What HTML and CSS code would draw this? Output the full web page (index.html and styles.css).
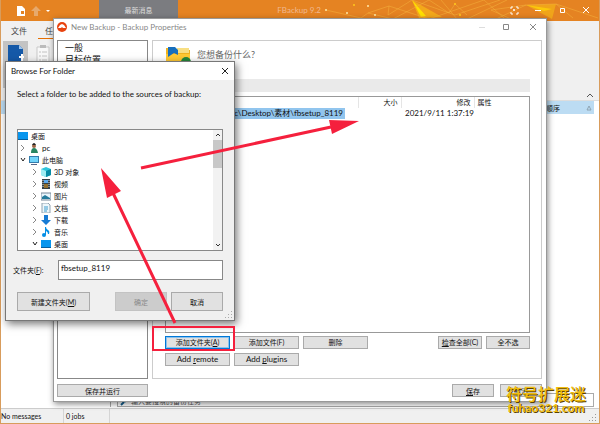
FILE: index.html
```html
<!DOCTYPE html>
<html lang="zh-CN">
<head>
<meta charset="utf-8">
<title>FBackup 9.2</title>
<link rel="stylesheet" href="styles.css">
</head>
<body>
<main class="app">
  <header class="titlebar">
    <svg class="quick" width="38" height="20" viewBox="0 0 38 20"><path d="M1 6h5l3 3v7H1z" fill="#fff"/><path d="M5 11h3v3H5z" fill="#e58322"/><path d="M20 6l5 5h-3v5h-4v-5h-3z" fill="#e7a96c"/><path d="M30 10h4l-2 2z" fill="#fff"/></svg>
    <span class="news">最新消息</span>
    <span class="product">FBackup 9.2</span>
    <svg class="network" width="278" height="20" viewBox="0 0 278 20">
      <path d="M91 0l30 17-23 1z" fill="#f3a81a"/><path d="M91 0l14 16-5 1z" fill="#ffe000"/>
      <path d="M205 5l30-1-4 15z" fill="#f0a41a"/><path d="M205 5l26 4-8 2z" fill="#fbc80a"/>
      <g fill="none" stroke="#f5b33d" stroke-width="1" opacity=".5"><path d="M5 10l35 8 7-5 21-7-1 9 24-15M47 13l25 6 36-19 20 13 6-9 12 11M68 6l40 13M91 0l43 15 45-15M108 19l55-19 20 18M146 19l40-19M170 10l35-5 30-1 17 14M205 5l-30 14M235 4l42 14M170 10l20 9M120 0l16 19"/></g>
      <g fill="#ffe9a8"><circle cx="5" cy="10" r="1"/><circle cx="26" cy="13" r="1"/><circle cx="47" cy="6" r="1"/><circle cx="54" cy="15" r="1"/></g><g fill="#ffc91c"><circle cx="33" cy="5" r="1"/><circle cx="134" cy="4" r="1"/><circle cx="139" cy="15" r="1"/></g>
      <g fill="none" stroke="#fff"><path d="M190 9V7h2m3 0h2v2m0 3v2h-2m-3 0h-2v-2M214 10.500h6M239.500 8.500h4v4h-4zM262 7l6 6m0-6l-6 6"/></g><circle cx="193" cy="10" r="1" fill="#fff"/>
    </svg>
  </header>
  <section class="ribbon">
    <nav class="tabs"><a href="#file">文件</a><a class="current" href="#task">任务</a></nav>
    <div class="tools">
      <button class="tool chosen" aria-label="New"><svg width="16" height="20" viewBox="0 0 16 20"><path d="M0 1h11l4 4v14H0z" fill="#1559a8"/><path d="M11 1v4h4z" fill="#9ec6ee"/><path d="M11 13h6m-3-3v7" stroke="#fff" stroke-width="2"/></svg></button>
      <button class="tool" aria-label="Tasks"><svg width="14" height="20" viewBox="0 0 14 20"><path d="M1 3h12v16H1z" fill="#f8f8f8" stroke="#c9c9c9"/><path d="M4 1h6v3H4z" fill="#bbb"/><path d="M3 8h2m1 0h5M3 12h2m1 0h5M3 16h2m1 0h5" stroke="#c2c2c2"/></svg></button>
      <svg class="fold" width="8" height="6" viewBox="0 0 8 6"><path d="M1 4l3-3 3 3" fill="none" stroke="#555"/></svg>
    </div>
  </section>
  <section class="workspace">
    <div class="columns"><span>顺序</span><svg width="6" height="6" viewBox="0 0 6 6"><path d="M3 1l2 4H1z" fill="none" stroke="#8fa4b2"/></svg></div>
    <div class="splitter"></div>
    <label class="search"><svg width="9" height="9" viewBox="0 0 9 9"><circle cx="5" cy="3" r="2" fill="none" stroke="#258fc0"/><path d="M4 5L1 8" stroke="#135f8f" stroke-width="2"/></svg><input type="text" aria-label="搜索" placeholder="输入要搜索的备份任务"></label>
  </section>
  <footer class="status"><span class="messages">No messages</span><span class="jobs">0 jobs</span><svg width="8" height="8" viewBox="0 0 8 8"><path d="M6 0h1v1H6zM3 3h1v1H3zM6 3h1v1H6zM0 6h1v1H0zM3 6h1v1H3zM6 6h1v1H6z" fill="#999"/></svg></footer>
</main>

<section class="window properties">
  <header class="caption">
    <svg width="10" height="10" viewBox="0 0 10 10"><circle cx="5" cy="5" r="5" fill="#e8430f"/><path d="M1 6h3l1-1 1 1h3L7 3 5 2 3 3z" fill="#fff"/></svg>
    <h1>New Backup - Backup Properties</h1>
    <svg class="controls" width="64" height="10" viewBox="0 0 64 10"><g fill="none" stroke="#888"><path d="M1 5.500h6" stroke="#ddd"/><path d="M25.500 2.500h5v5h-5zM52 2l6 6m0-6l-6 6"/></g></svg>
  </header>
  <div class="panes">
    <ul class="pages"><li>一般</li><li>目标位置</li></ul>
    <div class="page">
      <div class="question">
        <svg width="26" height="23" viewBox="0 0 26 23"><path d="M1 3h9l3 2h12v17H1z" fill="#f0b31f"/><path d="M12 3h12v5H12z" fill="#f8df83"/><path d="M1 9h24v13H1z" fill="#ffc933"/><path d="M3 2h7l3 3v5l-4-2-6 4z" fill="#176fbd"/><circle cx="21" cy="17" r="5" fill="#26883b"/></svg>
        <h2>您想备份什么?</h2>
      </div>
      <div class="band"></div>
      <div class="sources">
        <table>
          <thead><tr><th class="name"></th><th class="right size">大小</th><th class="right date">修改</th><th>属性</th></tr></thead>
          <tbody><tr><td><span class="path">C:\Users\pc\Desktop\素材\fbsetup_8119</span></td><td></td><td class="right">2021/9/11 1:37:19</td><td></td></tr></tbody>
        </table>
      </div>
      <div class="row actions">
        <button class="btn focus">添加文件夹(<u>A</u>)</button><button class="btn">添加文件(F)</button><button class="btn">删除</button>
        <button class="btn small push"><u>检</u>查全部(C)</button><button class="btn small">全不选</button>
      </div>
      <div class="row actions"><button class="btn latin">Add <u>r</u>emote</button><button class="btn latin">Add <u>p</u>lugins</button></div>
    </div>
  </div>
  <div class="row bottom"><button class="btn run">保存并运行</button><button class="btn end push"><u>保</u>存</button><button class="btn end">取消</button></div>
</section>

<section class="window browse">
  <header class="caption"><h1>Browse For Folder</h1><svg width="8" height="8" viewBox="0 0 8 8"><path d="M1 1l6 6m0-6L1 7" stroke="#222"/></svg></header>
  <div class="content">
    <p>Select a folder to be added to the sources of backup:</p>
    <div class="treebox">
      <ul class="tree">
        <li><svg class="ico" viewBox="0 0 10 10"><path d="M0 1h10v8H0z" fill="#0795ee"/><path d="M0 8h10v1H0z" fill="#055e9e"/></svg>桌面</li>
        <li><svg class="tw" viewBox="0 0 6 8"><path d="M1 1l3 3-3 3"/></svg><svg class="ico" viewBox="0 0 10 10"><circle cx="5" cy="3" r="2" fill="#9a6545"/><path d="M3 2q2-4 4 0z" fill="#222"/><path d="M2 10q0-5 3-5t4 5z" fill="#288562"/></svg><span class="latin">pc</span></li>
        <li><svg class="tw open" viewBox="0 0 6 8"><path d="M1 2l2 3 2-3"/></svg><svg class="ico" viewBox="0 0 10 10"><path d="M0 1h10v7H0z" fill="#347cac"/><path d="M1 2h8v5H1z" fill="#70d4fa"/><path d="M2 9h6v1H2z" fill="#568"/></svg>此电脑</li>
        <li class="deep"><svg class="tw" viewBox="0 0 6 8"><path d="M1 1l3 3-3 3"/></svg><svg class="ico" viewBox="0 0 10 10"><path d="M0 2l5-2 5 2v6l-5 2-5-2z" fill="#31c5dc"/><path d="M0 2l5 2v6L0 8z" fill="#a0edf3"/><path d="M5 4l5-2v6l-5 2z" fill="#078ba5"/></svg>3D 对象</li>
        <li class="deep"><svg class="tw" viewBox="0 0 6 8"><path d="M1 1l3 3-3 3"/></svg><svg class="ico" viewBox="0 0 10 10"><path d="M1 0h8v10H1z" fill="#344048"/><path d="M3 1h4v3H3z" fill="#5caaf0"/><path d="M3 5h4v4H3z" fill="#94702f"/><path d="M2 1v8M8 1v8" stroke="#ddd" stroke-dasharray="1 1"/></svg>视频</li>
        <li class="deep"><svg class="tw" viewBox="0 0 6 8"><path d="M1 1l3 3-3 3"/></svg><svg class="ico" viewBox="0 0 10 10"><path d="M0 2h10v7H0z" fill="#e8f5fc" stroke="#789" stroke-width="1"/><path d="M1 6l3-2 5 3v1H1z" fill="#247b9c"/></svg>图片</li>
        <li class="deep"><svg class="tw" viewBox="0 0 6 8"><path d="M1 1l3 3-3 3"/></svg><svg class="ico" viewBox="0 0 10 10"><path d="M1 0h6l2 2v8H1z" fill="#eef7fb" stroke="#91a4b1"/><path d="M3 4h4M3 6h4M3 8h3" stroke="#3b9bcd"/></svg>文档</li>
        <li class="deep"><svg class="tw" viewBox="0 0 6 8"><path d="M1 1l3 3-3 3"/></svg><svg class="ico" viewBox="0 0 10 10"><path d="M3 0h4v5h3l-5 5-5-5h3z" fill="#187bd4"/></svg>下载</li>
        <li class="deep"><svg class="tw" viewBox="0 0 6 8"><path d="M1 1l3 3-3 3"/></svg><svg class="ico" viewBox="0 0 10 10"><path d="M4 0h1q0 2 2 3t1 4H7q0-2-2-3v4H4z" fill="#058fe5"/><ellipse cx="3" cy="8" rx="2" ry="2" fill="#058fe5"/></svg>音乐</li>
        <li class="deep"><svg class="tw open" viewBox="0 0 6 8"><path d="M1 2l2 3 2-3"/></svg><svg class="ico" viewBox="0 0 10 10"><path d="M0 1h10v8H0z" fill="#0795ee"/><path d="M0 8h10v1H0z" fill="#055e9e"/></svg>桌面</li>
      </ul>
      <div class="scroll"><svg width="8" height="10" viewBox="0 0 8 10"><path d="M2 6l2-2 2 2"/></svg><span></span><svg width="8" height="10" viewBox="0 0 8 10"><path d="M2 4l2 2 2-2"/></svg></div>
    </div>
    <div class="row field"><label for="folder">文件夹(<u>F</u>):</label><input id="folder" type="text" value="fbsetup_8119"></div>
    <div class="row choices"><button class="btn create">新建文件夹(<u>M</u>)</button><button class="btn push" disabled>确定</button><button class="btn">取消</button></div>
  </div>
  <svg class="grip" width="8" height="8" viewBox="0 0 8 8"><path d="M6 0h1v1H6zM3 3h1v1H3zM6 3h1v1H6zM0 6h1v1H0zM3 6h1v1H3zM6 6h1v1H6z" fill="#aaa"/></svg>
</section>

<svg class="marks" width="600" height="424" viewBox="0 0 600 424"><g stroke="#f5203d" fill="none"><path d="M153 327h81v23h-81z" stroke-width="2"/><path d="M175 323L113 193M141 168L331 127" stroke-width="3"/></g><path d="M101 168l20 23-14 7zM359 121l-30-1 3 14z" fill="#f5203d"/></svg>
<div class="watermark"><strong>符号扩展迷</strong><span>fuhao321.com</span></div>
</body>
</html>
```
FILE: styles.css
```css
* { box-sizing: border-box; }
body, h1, h2, p, ul { margin: 0; padding: 0; font-size: 8px; font-weight: normal; }
body { position: relative; min-height: 100vh; font: 8px/12px Lato, "Noto Sans CJK SC", sans-serif; color: #111; overflow: hidden; }
ul { list-style: none; }
svg { display: block; flex: none; }
u { text-underline-offset: 1px; }
button, input { font: inherit; color: inherit; }
.row { display: flex; }
.push { margin-left: auto; }

.app { display: flex; flex-direction: column; min-height: 100vh; border: 1px solid #d89c5c; border-top: 0; background: #fff; }
.titlebar { display: flex; height: 21px; background: #e58322; }
.quick { margin-left: 15px; }
.news { width: 79px; height: 18px; margin-left: 45px; background: #7b7c80; color: #ddd; font-size: 7px; text-align: center; line-height: 21px; }
.product { margin-left: auto; color: #f0b890; line-height: 21px; }
.network { width: 278px; }
.ribbon { height: 80px; background: #f0f0f0; border-bottom: 1px solid #ddd; }
.tabs { display: flex; height: 18px; padding-left: 3px; }
.tabs a { padding: 3px 7px 0; color: #444; text-decoration: none; line-height: 14px; }
.tabs a + a { margin-left: 4px; }
.tabs .current { border-bottom: 1px solid #e66f00; }
.tools { display: flex; height: 61px; padding: 2px 4px 0 2px; }
.tool { display: flex; justify-content: center; width: 25px; height: 47px; padding: 3px 0; border: 0; background: none; }
.tool + .tool { margin-left: 2px; }
.chosen { background: #c3c3c3; }
.fold { margin: 52px 1px 0 auto; }
.workspace { display: grid; grid-template: 13px 1fr 14px / 110px 1fr; flex: 1; padding-right: 5px; column-gap: 6px; padding-bottom: 1px; }
.columns { grid-column: 1 / 3; display: flex; align-items: center; justify-content: space-between; padding: 0 2px 0 545px; background: #bcdcf3; font-size: 7px; }
.splitter { grid-row: 2 / 4; border-right: 1px solid #aaa; }
.search { grid-row: 3; grid-column: 2; display: flex; align-items: flex-end; border: 1px solid #aaa; padding: 0 2px; }
.search input { flex: 1; min-width: 0; border: 0; padding: 0 2px; height: 9px; line-height: 9px; background: none; outline: 0; font-size: 7px; }
.search input::placeholder { color: #555; }
.status { display: flex; height: 15px; background: #f0f0f0; border-top: 1px solid #ccc; font-size: 7px; line-height: 14px; }
.status span { border-right: 1px solid #d5d5d5; }
.status svg { margin: 5px 2px 0 auto; }
.messages { width: 63px; }
.jobs { width: 46px; padding-left: 2px; }

.window { position: absolute; display: flex; flex-direction: column; border: 1px solid #999; background: #fff; }
.caption { display: flex; align-items: center; }
.properties { left: 53px; top: 18px; right: 53px; height: 384px; padding: 0 4px 4px 3px; box-shadow: 1px 2px 6px #0007; }
.properties .caption { height: 17px; gap: 4px; color: #888; }
.controls { margin-left: auto; }
.properties .caption h1 { line-height: 16px; }
.panes { display: flex; gap: 4px; height: 340px; margin-top: 4px; }
.pages { width: 91px; border: 1px solid #888; padding: 1px 7px; font-size: 9px; }
.page { flex: 1; border: 1px solid #ccc; padding: 4px 11px 4px 12px; }
.question { display: flex; gap: 6px; height: 34px; }
.question h2 { font-size: 9px; line-height: 20px; color: #666; }
.band { height: 13px; background: #eaeaea; }
.sources { height: 237px; margin-top: 4px; border: 1px solid #999; }
table { width: 100%; table-layout: fixed; border-collapse: collapse; }
th, td { padding: 0 3px; height: 11px; line-height: 11px; font-weight: normal; text-align: left; white-space: nowrap; }
th { border-right: 1px solid #e5e5e5; font-size: 7px; }
th:last-child { border: 0; }
td { padding: 0; }
.right { text-align: right; }
.name { width: 192px; }
.size { width: 43px; }
.date { width: 73px; }
.path { float: right; margin-right: 13px; padding: 0 2px; background: #91c5ee; }
.btn { width: 65px; height: 13px; padding: 0; border: 1px solid #aaa; background: #e1e1e1; font-size: 7px; line-height: 10px; text-align: center; white-space: nowrap; }
.latin { font-size: 8px; }
.actions { gap: 4px; margin-top: 3px; }
.actions + .actions { margin-top: 4px; }
.small { width: 44px; }
.focus { border: 1px solid #0078d7; outline: 1px solid #8bc1ed; outline-offset: -2px; }
.bottom { gap: 6px; margin-top: 5px; }
.run { width: 91px; }
.end { width: 42px; }

.browse { left: 5px; top: 61px; width: 230px; height: 260px; background: #f0f0f0; border-color: #777; box-shadow: 2px 3px 8px #0008; }
.browse .caption { justify-content: space-between; height: 18px; padding: 0 5px; background: #fff; }
.content { padding: 8px 11px 0; }
.treebox { display: flex; height: 122px; margin-top: 29px; border: 1px solid #888; background: #fff; }
.tree { flex: 1; overflow: hidden; font-size: 7px; line-height: 10px; }
.tree li { display: flex; align-items: center; height: 12px; gap: 3px; }
.tree .deep { padding-left: 12px; }
.ico { width: 10px; height: 10px; }
.tw { width: 6px; height: 8px; margin-left: 2px; fill: none; stroke: #888; }
.open { stroke: #222; }
.scroll { display: flex; flex-direction: column; align-items: center; width: 9px; background: #f2f2f2; }
.scroll svg { fill: none; stroke: #333; }
.scroll span { width: 9px; height: 28px; background: #c8c8c8; }
.scroll svg:last-child { margin-top: auto; }
.field { margin: 9px 0 12px -4px; align-items: center; }
.field label { width: 45px; font-size: 7px; }
.field input { flex: 1; min-width: 0; height: 20px; padding: 0 2px 5px; border: 1px solid #888; background: #fff; }
.choices { gap: 4px; }
.choices .btn { width: 52px; height: 19px; }
.choices .create { width: 73px; }
.choices .btn:disabled { background: #ccc; border-color: #c3c3c3; color: #888; }
.grip { margin: auto 1px 1px auto; }
.marks { position: absolute; left: 0; top: 0; pointer-events: none; }
.watermark { position: absolute; right: 14px; bottom: 10px; display: flex; flex-direction: column; align-items: center; color: #f0bd10; text-shadow: 1px 1px 0 #5a4300; font: bold 12px/12px Lato, "Noto Sans CJK SC", sans-serif; }
.watermark strong { font-size: 16px; line-height: 16px; font-weight: 500; }
```
